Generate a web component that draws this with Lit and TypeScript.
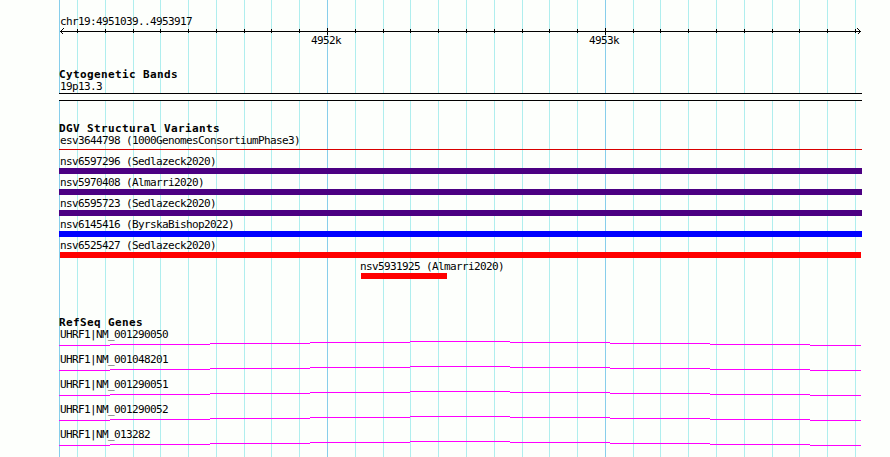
import { LitElement, css, html, svg } from "lit";
import { customElement, property } from "lit/decorators.js";

interface Variant {
  label: string;
  kind: "complex" | "gain" | "loss" | "thin";
  start: number;
  width: number;
}

const GRID = [
  59, 77, 105, 133, 160, 188, 216, 244, 271, 299, 327, 355, 383, 410, 438, 466,
  494, 522, 549, 577, 605, 633, 660, 688, 716, 744, 772, 799, 827, 855,
];
const MAJOR = [59, 327, 605];

const VARIANTS: Variant[] = [
  { label: "esv3644798 (1000GenomesConsortiumPhase3)", kind: "thin", start: 0, width: 803 },
  { label: "nsv6597296 (Sedlazeck2020)", kind: "complex", start: 0, width: 803 },
  { label: "nsv5970408 (Almarri2020)", kind: "complex", start: 0, width: 803 },
  { label: "nsv6595723 (Sedlazeck2020)", kind: "complex", start: 0, width: 803 },
  { label: "nsv6145416 (ByrskaBishop2022)", kind: "gain", start: 0, width: 803 },
  { label: "nsv6525427 (Sedlazeck2020)", kind: "loss", start: 1, width: 801 },
  { label: "nsv5931925 (Almarri2020)", kind: "loss", start: 302, width: 86 },
];

const GENES = [
  "UHRF1|NM_001290050",
  "UHRF1|NM_001048201",
  "UHRF1|NM_001290051",
  "UHRF1|NM_001290052",
  "UHRF1|NM_013282",
];

@customElement("genome-ruler")
export class GenomeRuler extends LitElement {
  static styles = css`
    :host {
      display: block;
      height: 23px;
    }

    svg {
      display: block;
      shape-rendering: crispEdges;
    }

    text {
      font: 11px "DejaVu Sans Mono", monospace;
      letter-spacing: -0.62px;
    }
  `;

  render() {
    const ticks = GRID.slice(1).map((x) => {
      const major = MAJOR.includes(x);
      return svg`<rect x=${x - 59} y=${major ? 1 : 2} width="1" height=${major ? 7 : 4} />`;
    });

    return html`
      <svg width="803" height="23">
        <rect x="1" y="4" width="801" height="1" />
        ${ticks}
        <path d="M4.5 1.5L1.5 4.5L4.5 7.5M798.5 1.5L801.5 4.5L798.5 7.5" fill="none" stroke="#000" />
        <text x="252" y="17">4952k</text>
        <text x="530" y="17">4953k</text>
      </svg>
    `;
  }
}

@customElement("variant-row")
export class VariantRow extends LitElement {
  @property({ attribute: false }) variant!: Variant;

  static styles = css`
    :host {
      display: block;
      height: 21px;
    }

    .label {
      height: 13px;
      line-height: 13px;
      padding-left: 1px;
      white-space: nowrap;
    }

    .bar {
      height: 6px;
    }

    .thin {
      height: 1px;
      margin-top: 2px;
      background: #d90000;
    }

    .complex {
      background: #4b0082;
    }

    .gain {
      background: #0000ff;
    }

    .loss {
      background: #ff0000;
    }
  `;

  render() {
    const { label, kind, start, width } = this.variant;
    // Full-length features keep their label at the panel edge
    const indent = Math.max(start - 2, 0);

    return html`
      <div class="label" style="margin-left:${indent}px">${label}</div>
      <div class="bar ${kind}" style="margin-left:${start}px;width:${width}px"></div>
    `;
  }
}

@customElement("gene-row")
export class GeneRow extends LitElement {
  @property() label = "";

  static styles = css`
    :host {
      display: block;
      height: 25px;
    }

    .label {
      height: 13px;
      line-height: 13px;
      padding-left: 1px;
    }

    svg {
      display: block;
      shape-rendering: crispEdges;
    }
  `;

  render() {
    return html`
      <div class="label">${this.label}</div>
      <svg width="803" height="6" fill="none" stroke="#ff00ff">
        <path
          d="M0 4.5H51M51 3.5H151M151 2.5H251M251 1.5H351M351 .5H451M451 1.5H551M551 2.5H651M651 3.5H751M751 4.5H802"
        />
      </svg>
    `;
  }
}

@customElement("app-root")
export class AppRoot extends LitElement {
  static styles = css`
    :host {
      display: block;
      position: relative;
      width: 890px;
      height: 457px;
      overflow: hidden;
      background: #fdfffc;
      color: #000;
      font: 11px "DejaVu Sans Mono", monospace;
      letter-spacing: -0.62px;
    }

    /* The grid lies behind every track */
    .grid {
      position: absolute;
      top: 0;
      left: 0;
      shape-rendering: crispEdges;
    }

    .minor {
      fill: #afeeee;
    }

    .major {
      fill: #87ceeb;
    }

    .tracks {
      position: relative;
      display: flex;
      flex-direction: column;
      width: 803px;
      padding: 15px 0 0 59px;
    }

    .region,
    .band {
      height: 12px;
      line-height: 13px;
      padding-left: 1px;
    }

    h2 {
      margin: 0;
      height: 12px;
      font-size: 11px;
      font-weight: bold;
      line-height: 13px;
      letter-spacing: 0.38px;
    }

    .cytogenetic {
      margin-top: 18px;
    }

    .ideogram {
      box-sizing: border-box;
      height: 8px;
      margin-top: 1px;
      border: solid #000;
      border-width: 1px 0;
      background: #fdfffc;
    }

    .variants {
      margin-top: 21px;
    }

    .genes {
      margin-top: 35px;
    }
  `;

  render() {
    return html`
      <svg class="grid" width="890" height="457">
        ${GRID.map(
          (x) => svg`<rect class=${MAJOR.includes(x) ? "major" : "minor"} x=${x} y="0" width="1" height="457" />`
        )}
      </svg>
      <div class="tracks">
        <div class="region">chr19:4951039..4953917</div>
        <genome-ruler></genome-ruler>
        <section class="cytogenetic">
          <h2>Cytogenetic Bands</h2>
          <div class="band">19p13.3</div>
          <div class="ideogram"></div>
        </section>
        <section class="variants">
          <h2>DGV Structural Variants</h2>
          ${VARIANTS.map((v) => html`<variant-row .variant=${v}></variant-row>`)}
        </section>
        <section class="genes">
          <h2>RefSeq Genes</h2>
          ${GENES.map((g) => html`<gene-row label=${g}></gene-row>`)}
        </section>
      </div>
    `;
  }
}
